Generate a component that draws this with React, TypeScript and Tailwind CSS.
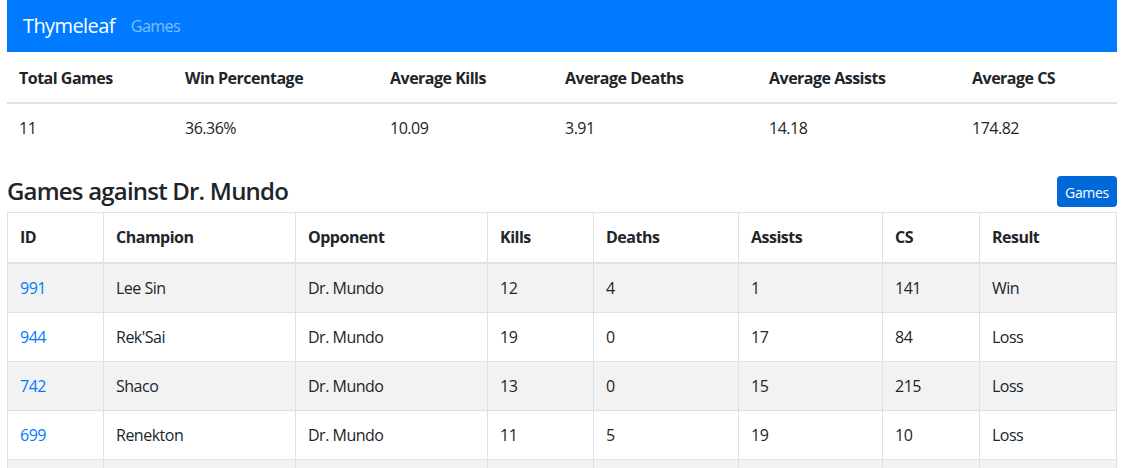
const stats = [
  { label: "Total Games", value: "11", w: "w-[166px]" },
  { label: "Win Percentage", value: "36.36%", w: "w-[205px]" },
  { label: "Average Kills", value: "10.09", w: "w-[175px]" },
  { label: "Average Deaths", value: "3.91", w: "w-[204px]" },
  { label: "Average Assists", value: "14.18", w: "w-[203px]" },
  { label: "Average CS", value: "174.82", w: "" },
];

const cols = [
  { label: "ID", w: "w-[96px]" },
  { label: "Champion", w: "w-[192px]" },
  { label: "Opponent", w: "w-[192px]" },
  { label: "Kills", w: "w-[106px]" },
  { label: "Deaths", w: "w-[145px]" },
  { label: "Assists", w: "w-[144px]" },
  { label: "CS", w: "w-[97px]" },
  { label: "Result", w: "" },
];

const games = [
  ["991", "Lee Sin", "Dr. Mundo", "12", "4", "1", "141", "Win"],
  ["944", "Rek'Sai", "Dr. Mundo", "19", "0", "17", "84", "Loss"],
  ["742", "Shaco", "Dr. Mundo", "13", "0", "15", "215", "Loss"],
  ["699", "Renekton", "Dr. Mundo", "11", "5", "19", "10", "Loss"],
  ["", "", "", "", "", "", "", ""],
];

export default function App() {
  return (
    <div
      className="bg-white text-[#212529] text-[16px] leading-6 tracking-[-0.5px] pl-[7px] w-[1132px] h-[468px] overflow-hidden"
      style={{ fontFamily: '"Open Sans", "Noto Sans", sans-serif' }}
    >
      <div className="w-[1110px]">
        {/* Navbar */}
        <nav className="bg-[#007bff] h-[52px] flex items-center px-4">
          <span className="text-white text-[20px] leading-[30px] mr-4 tracking-[-0.6px]">Thymeleaf</span>
          <span className="text-white/50">Games</span>
        </nav>

        {/* Stats */}
        <table className="w-full border-collapse">
          <thead>
            <tr>
              {stats.map((s) => (
                <th
                  key={s.label}
                  className={`${s.w} text-left font-bold px-3 pt-[14px] pb-[12px] border-b-2 border-[#dee2e6]`}
                >
                  {s.label}
                </th>
              ))}
            </tr>
          </thead>
          <tbody>
            <tr>
              {stats.map((s) => (
                <td key={s.label} className="px-3 py-3">
                  {s.value}
                </td>
              ))}
            </tr>
          </tbody>
        </table>

        {/* Heading */}
        <div className="flex items-end justify-between mt-[24px] mb-[5px]">
          <h4 className="text-[24px] leading-[29px] font-semibold tracking-[-0.8px] mb-[2px]">Games against Dr. Mundo</h4>
          <button className="bg-[#0069d9] text-white text-[14px] leading-[21px] h-[31px] px-2 pt-[1px] rounded-[4px] tracking-[-0.3px] w-[60px]">
            Games
          </button>
        </div>

        {/* Games table */}
        <table className="w-full border-collapse border border-[#dee2e6]">
          <thead>
            <tr>
              {cols.map((c) => (
                <th
                  key={c.label}
                  className={`${c.w} text-left font-bold px-3 pt-3 pb-[13px] border border-[#dee2e6] border-b-2`}
                >
                  {c.label}
                </th>
              ))}
            </tr>
          </thead>
          <tbody>
            {games.map((g, i) => (
              <tr key={i} className={i % 2 === 0 ? "bg-[#f2f2f2]" : "bg-white"}>
                {g.map((v, j) => (
                  <td key={j} className="px-3 py-3 h-[49px] border border-[#dee2e6]">
                    {j === 0 ? <a className="text-[#007bff]">{v}</a> : v}
                  </td>
                ))}
              </tr>
            ))}
          </tbody>
        </table>
      </div>
    </div>
  );
}
